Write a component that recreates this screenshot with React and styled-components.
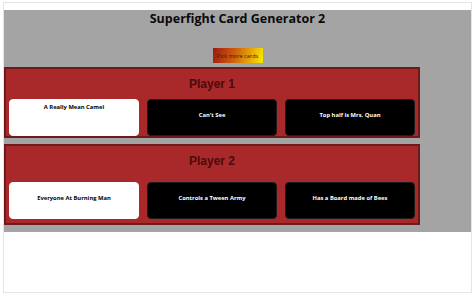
import React from 'react'
import styled, {createGlobalStyle} from 'styled-components'

const GlobalStyle = createGlobalStyle`
  html, body {
    margin: 0;
    background: #ffffff;
  }
`

const players = [
  {
    name: 'Player 1',
    titleGap: 8,
    bottomPad: 0,
    cards: [
      {text: 'A Really Mean Camel', light: true, top: true},
      {text: "Can't See"},
      {text: 'Top half is Mrs. Quan'},
    ],
  },
  {
    name: 'Player 2',
    titleGap: 14,
    bottomPad: 4,
    cards: [
      {text: 'Everyone At Burning Man', light: true},
      {text: 'Controls a Tween Army'},
      {text: 'Has a Board made of Bees'},
    ],
  },
]

const Frame = styled.div`
  box-sizing: border-box;
  margin: 2px 0 0 3px;
  width: 469px;
  height: 291px;
  border: 1px solid #e4e4e4;
  padding-top: 7px;
`

const Stage = styled.div`
  background-color: #a4a4a4;
  height: 222px;
  display: flex;
  flex-direction: column;
  align-items: flex-start;
`

const Title = styled.h1`
  align-self: stretch;
  margin: 0;
  font-family: "Open Sans", "Liberation Sans", sans-serif;
  font-weight: 700;
  font-size: 12.5px;
  line-height: 17px;
  text-align: center;
  color: #0a0a0a;
`

const PickButton = styled.button`
  align-self: center;
  margin: 21px 0 4px;
  width: 50px;
  height: 15px;
  padding: 0;
  border: none;
  background: linear-gradient(105deg, #9c1812 0%, #d2620c 45%, #f9ec00 100%);
  font-family: "Open Sans", "Liberation Sans", sans-serif;
  font-size: 5.6px;
  color: #3a1a00;
`

const Panel = styled.section`
  box-sizing: border-box;
  width: 416px;
  margin-bottom: 6px;
  background-color: #a9282a;
  border: 2px solid #6c1a1a;
  padding: 8px 3px ${props => props.bottomPad}px;
`

const PlayerName = styled.h2`
  margin: 0 0 ${props => props.gap}px;
  font-family: "Liberation Sans", Arial, sans-serif;
  font-weight: 700;
  font-size: 12px;
  line-height: 14px;
  text-align: center;
  color: #4a0c0c;
`

const CardRow = styled.div`
  display: grid;
  grid-template-columns: repeat(3, 1fr);
  gap: 8px;
`

const Card = styled.div`
  box-sizing: border-box;
  height: 37px;
  border-radius: 4px;
  padding-top: ${props => props.top ? 3 : 11}px;
  background-color: ${props => props.light ? '#ffffff' : '#000000'};
  color: ${props => props.light ? '#000000' : '#ffffff'};
  border: 1px solid ${props => props.light ? '#ffffff' : '#1c1c1c'};
  font-family: "Open Sans", "Liberation Sans", sans-serif;
  font-weight: 700;
  font-size: 5.8px;
  line-height: 8px;
  text-align: center;
`

const PlayerPanel = ({player}) => (
  <Panel bottomPad={player.bottomPad}>
    <PlayerName gap={player.titleGap}>{player.name}</PlayerName>
    <CardRow>
      {player.cards.map(card => (
        <Card key={card.text} light={card.light} top={card.top}>{card.text}</Card>
      ))}
    </CardRow>
  </Panel>
)

export default function App() {
  return (
    <>
      <GlobalStyle />
      <Frame>
        <Stage>
          <Title>Superfight Card Generator 2</Title>
          <PickButton>Pick more cards</PickButton>
          {players.map(p => <PlayerPanel key={p.name} player={p} />)}
        </Stage>
      </Frame>
    </>
  )
}
